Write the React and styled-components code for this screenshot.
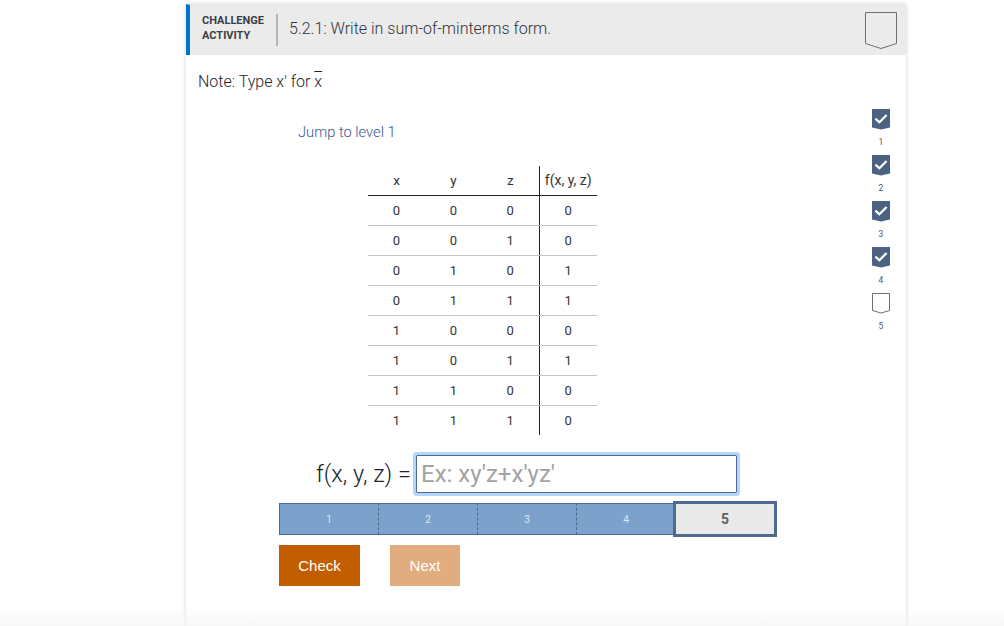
import React from "react";
import styled, { createGlobalStyle } from "styled-components";

const Global = createGlobalStyle`
  html, body { margin: 0; padding: 0; background: #fff; height: 100%; overflow: hidden; }
  body { font-family: Roboto, "Liberation Sans", sans-serif; color: #333; }
`;

const Page = styled.div`
  height: 626px;
  padding: 4px 0 0 186px;
  box-sizing: border-box;
  overflow: hidden;
  position: relative;
`;
const Card = styled.section`
  width: 720px;
  height: 640px;
  background: #fff;
  box-shadow: 0 0 4px rgba(0, 0, 0, 0.2);
`;
const Header = styled.header`
  height: 51px;
  box-sizing: border-box;
  background: #ebebeb;
  border-left: 4px solid #0077c8;
  border-top: 1px solid #ebebeb;
  display: flex;
  align-items: center;
  padding: 0 9px 0 12px;
`;
const Kicker = styled.div`
  font-size: 11px;
  font-weight: 700;
  line-height: 15px;
  color: #3a3f47;
  width: 63px;
  padding: 0 11px 4px 0;
  height: 28px;
  display: flex;
  align-items: center;
  border-right: 2px solid #b5b5b5;
  box-sizing: content-box;
`;
const Title = styled.h1`
  flex: 1;
  margin: 0 0 0 11px;
  font-size: 16px;
  font-weight: 300;
  color: #2f333a;
  position: relative;
  top: -2px;
`;
const Body = styled.div`
  display: flex;
`;
const Main = styled.div`
  width: 676px;
`;
const Note = styled.p`
  margin: 17px 0 0 12px;
  font-size: 16px;
  font-weight: 300;
  line-height: 20px;
  color: #20242b;
`;
const Over = styled.span`
  text-decoration: overline;
  text-decoration-thickness: 1px;
`;
const Jump = styled.div`
  margin: 30px 0 0 112px;
  font-size: 14.7px;
  font-weight: 300;
  line-height: 21px;
  color: #35588f;
`;
const Grid = styled.table`
  margin: 23px 0 0 182px;
  border-collapse: collapse;
  table-layout: fixed;
  width: 229px;
  font-size: 13px;
  color: #333;
`;
const Th = styled.th`
  height: 29px;
  padding: 0;
  font-weight: 400;
  font-size: ${(p) => (p.$fn ? "14px" : "13.5px")};
  width: ${(p) => (p.$fn ? "58px" : "57px")};
  text-align: center;
  border-bottom: 1px solid #222;
  border-left: ${(p) => (p.$fn ? "1px solid #222" : "none")};
  box-sizing: border-box;
`;
const Td = styled.td`
  height: 30px;
  padding: 0;
  text-align: center;
  box-sizing: border-box;
  border-bottom: ${(p) => (p.$last ? "none" : "1px solid #c4c4c4")};
  border-left: ${(p) => (p.$fn ? "1px solid #222" : "none")};
`;
const AnswerRow = styled.div`
  margin: 20px 0 0 130px;
  display: flex;
  align-items: center;
  height: 38px;
`;
const AnswerLabel = styled.label`
  font-size: 23.5px;
  font-weight: 300;
  color: #20242b;
  white-space: nowrap;
  width: 100px;
`;
const AnswerInput = styled.input`
  width: 321px;
  height: 38px;
  box-sizing: border-box;
  border: 1px solid #4c6a92;
  outline: 3px solid #b3d5fb;
  outline-offset: 0;
  border-radius: 1px;
  padding: 0 4px;
  margin: 0;
  font: 400 24px Roboto, sans-serif;
  color: #333;
  background: #fff;
  &::placeholder { color: #a3a3a3; opacity: 1; }
`;
const Levels = styled.div`
  margin: 8px 0 0 93px;
  display: flex;
  align-items: center;
  width: 498px;
`;
const Segment = styled.div`
  width: ${(p) => (p.$first ? "100px" : "99px")};
  height: 32px;
  box-sizing: border-box;
  background: #7ca2cc;
  border-top: 1px solid #4c6a92;
  border-bottom: 1px solid #4c6a92;
  border-left: ${(p) => (p.$first ? "1px solid #4c6a92" : "none")};
  border-right: 1px dashed #4c6a92;
  color: #dfe8f2;
  font-size: 10px;
  display: flex;
  align-items: center;
  justify-content: center;
`;
const ActiveSegment = styled.div`
  width: 104px;
  height: 36px;
  margin-left: -3px;
  box-sizing: border-box;
  background: #e9e9e9;
  border: 3px solid #4c6a92;
  color: #5e5e5e;
  font-size: 14px;
  font-weight: 700;
  display: flex;
  align-items: center;
  justify-content: center;
  position: relative;
`;
const Actions = styled.div`
  margin: 8px 0 0 93px;
  display: flex;
  gap: 30px;
`;
const Button = styled.button`
  height: 41px;
  width: ${(p) => p.$w}px;
  border: none;
  padding: 0;
  background: ${(p) => (p.$muted ? "#e1ad80" : "#c25e00")};
  color: #fff;
  font: 400 15px "Liberation Sans", Arial, sans-serif;
`;
const Rail = styled.aside`
  width: 38px;
  padding-top: 54px;
  display: flex;
  flex-direction: column;
  align-items: center;
`;
const RailItem = styled.div`
  height: 46px;
  display: flex;
  flex-direction: column;
  align-items: center;
  font-size: 8.5px;
  color: #555;
`;
const RailNum = styled.span`
  margin-top: 6px;
  line-height: 12px;
`;
const HeaderBadge = styled.svg`
  flex: none;
  display: block;
`;
const Fade = styled.div`
  position: absolute;
  left: 0;
  right: 0;
  bottom: 0;
  height: 20px;
  background: linear-gradient(rgba(245, 245, 245, 0), rgba(245, 245, 245, 0.7));
  pointer-events: none;
`;

const Badge = ({ done }) => (
  <svg width="18" height="21" viewBox="0 0 18 21">
    {done ? (
      <>
        <path d="M0 0H18V18.6L9 20.6L0 18.6Z" fill="#4c6283" />
        <path d="M3.4 9.6L7.4 13.2L14.6 6" fill="none" stroke="#fff" strokeWidth="2.2" />
      </>
    ) : (
      <path d="M.5 .5H17.5V17.5L9 20L.5 17.5Z" fill="#fff" stroke="#6e6e6e" />
    )}
  </svg>
);

const rows = [
  [0, 0, 0, 0],
  [0, 0, 1, 0],
  [0, 1, 0, 1],
  [0, 1, 1, 1],
  [1, 0, 0, 0],
  [1, 0, 1, 1],
  [1, 1, 0, 0],
  [1, 1, 1, 0],
];

export default function App() {
  return (
    <Page>
      <Global />
      <Card>
        <Header>
          <Kicker>CHALLENGE ACTIVITY</Kicker>
          <Title>5.2.1: Write in sum-of-minterms form.</Title>
          <HeaderBadge width="32" height="37" viewBox="0 0 32 37">
            <path d="M.5 .5H31.5V31.5L16 36.5L.5 31.5Z" fill="#ebebeb" stroke="#6e6e6e" />
          </HeaderBadge>
        </Header>
        <Body>
          <Main>
            <Note>
              Note: Type x' for <Over>x</Over>
            </Note>
            <Jump>Jump to level 1</Jump>
            <Grid>
              <thead>
                <tr>
                  <Th>x</Th>
                  <Th>y</Th>
                  <Th>z</Th>
                  <Th $fn>f(x, y, z)</Th>
                </tr>
              </thead>
              <tbody>
                {rows.map((r, i) => (
                  <tr key={i}>
                    {r.map((v, j) => (
                      <Td key={j} $fn={j === 3} $last={i === rows.length - 1}>
                        {v}
                      </Td>
                    ))}
                  </tr>
                ))}
              </tbody>
            </Grid>
            <AnswerRow>
              <AnswerLabel>f(x, y, z) =</AnswerLabel>
              <AnswerInput placeholder="Ex: xy'z+x'yz'" />
            </AnswerRow>
            <Levels>
              <Segment $first>1</Segment>
              <Segment>2</Segment>
              <Segment>3</Segment>
              <Segment>4</Segment>
              <ActiveSegment>5</ActiveSegment>
            </Levels>
            <Actions>
              <Button $w={81}>Check</Button>
              <Button $w={70} $muted>Next</Button>
            </Actions>
          </Main>
          <Rail>
            {[1, 2, 3, 4, 5].map((n) => (
              <RailItem key={n}>
                <Badge done={n < 5} />
                <RailNum>{n}</RailNum>
              </RailItem>
            ))}
          </Rail>
        </Body>
      </Card>
      <Fade />
    </Page>
  );
}
